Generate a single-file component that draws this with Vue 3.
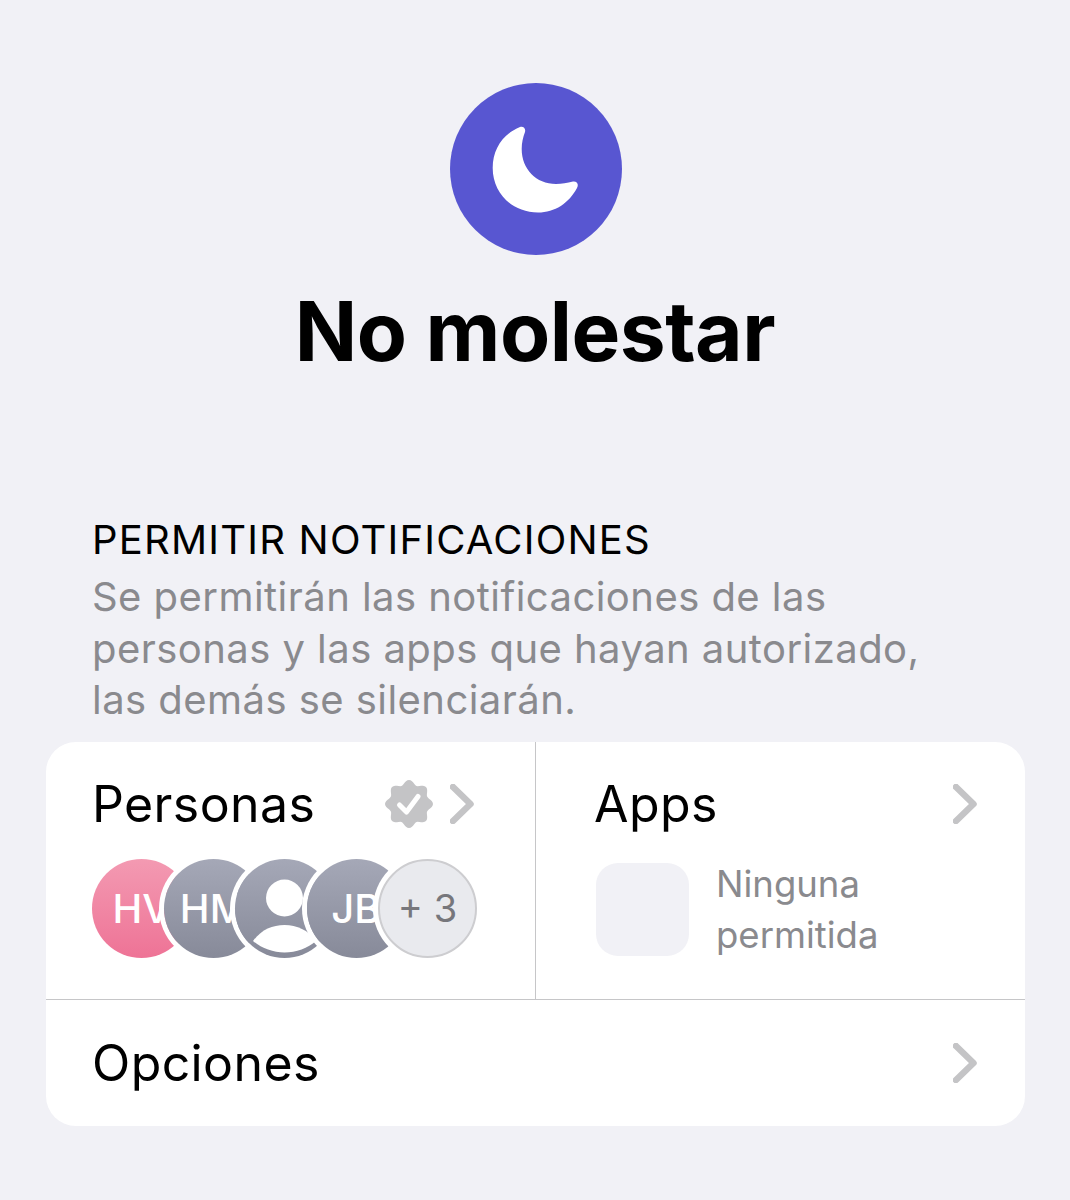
<template>
  <div class="page">
    <div class="moon-circle">
      <svg viewBox="0 0 172 172" width="172" height="172">
        <path
          d="M70 44C73 43 76 45 75 49C73 54 71.7 60 71.7 66C71.7 86 86 101 106 101C112 101 117 100 123 98.5C127 98 129 101 127 105C119 120 105 129.5 88 129.5C62 129.5 42.7 110 42.7 85C42.7 66 53 51 70 44Z"
          fill="#fff"
        />
      </svg>
    </div>
    <h1 class="title">No molestar</h1>

    <div class="intro">
      <h2 class="intro-heading">PERMITIR NOTIFICACIONES</h2>
      <p class="intro-text">
        Se permitirán las notificaciones de las<br />
        personas y las apps que hayan autorizado,<br />
        las demás se silenciarán.
      </p>
    </div>

    <div class="card">
      <div class="top-row">
        <div class="cell cell-people">
          <div class="cell-head">
            <span class="cell-title">Personas</span>
            <svg class="badge" viewBox="0 0 50 50" width="50" height="50">
              <path :d="badgePath" fill="#c4c4c6" />
              <path
                d="M15.5 26L22.5 33L34 17.5"
                fill="none"
                stroke="#fff"
                stroke-width="5"
                stroke-linecap="round"
                stroke-linejoin="round"
              />
            </svg>
            <svg class="chevron" viewBox="0 0 24 40" width="24" height="40">
              <path d="M3 3L20.5 20L3 37" />
            </svg>
          </div>
          <div class="avatars">
            <div class="avatar pink"><span>HV</span></div>
            <div class="avatar grey"><span>HM</span></div>
            <div class="avatar grey">
              <svg viewBox="0 0 99 99" width="99" height="99">
                <circle cx="49.5" cy="39" r="18.5" fill="#fff" />
                <path d="M18 82C26 71 37 66 49.5 66C62 66 73 71 81 82C73 89 61 93.5 49.5 93.5C38 93.5 26 89 18 82Z" fill="#fff" />
              </svg>
            </div>
            <div class="avatar grey"><span>JB</span></div>
            <div class="avatar more"><span>+ 3</span></div>
          </div>
        </div>

        <div class="cell cell-apps">
          <div class="cell-head">
            <span class="cell-title">Apps</span>
            <svg class="chevron" viewBox="0 0 24 40" width="24" height="40">
              <path d="M3 3L20.5 20L3 37" />
            </svg>
          </div>
          <div class="apps-body">
            <div class="app-placeholder"></div>
            <div class="apps-text">Ninguna<br />permitida</div>
          </div>
        </div>
      </div>

      <div class="options-row">
        <span class="cell-title">Opciones</span>
        <svg class="chevron" viewBox="0 0 24 40" width="24" height="40">
          <path d="M3 3L20.5 20L3 37" />
        </svg>
      </div>
    </div>
  </div>
</template>

<script setup>
// scalloped badge outline, 8 lobes
const points = []
for (let i = 0; i < 96; i++) {
  const a = (i / 96) * Math.PI * 2
  const r = 21.8 + 2.2 * Math.cos(a * 8)
  points.push((25 + r * Math.sin(a)).toFixed(2) + ' ' + (25 - r * Math.cos(a)).toFixed(2))
}
const badgePath = 'M' + points.join('L') + 'Z'
</script>

<style>
body {
  margin: 0;
  background: #f1f1f6;
}
</style>

<style scoped>
.page {
  height: 1200px;
  padding-top: 83px;
  box-sizing: border-box;
  background: #f1f1f6;
  font-family: Inter, "Liberation Sans", sans-serif;
  overflow: hidden;
}

.moon-circle {
  width: 172px;
  height: 172px;
  margin-left: 450px;
  border-radius: 50%;
  background: #5856d1;
}

.moon-circle svg {
  display: block;
}

.title {
  margin: 28px 0 0;
  font-size: 82px;
  line-height: 97px;
  font-weight: 700;
  letter-spacing: -0.5px;
  text-align: center;
  color: #000;
}

.intro {
  margin: 135px 0 0 92px;
}

.intro-heading {
  margin: 0;
  font-size: 40px;
  line-height: 50px;
  font-weight: 400;
  letter-spacing: 1.2px;
  color: #000;
}

.intro-text {
  margin: 6px 0 0;
  font-size: 40px;
  line-height: 51.5px;
  letter-spacing: 0.45px;
  color: #8a8a8e;
  white-space: nowrap;
}

.card {
  margin: 16px 45px 0 46px;
  background: #fff;
  border-radius: 30px;
  overflow: hidden;
}

.top-row {
  display: flex;
  height: 257px;
  border-bottom: 1px solid #c6c6c8;
}

.cell {
  box-sizing: border-box;
  padding-top: 38px;
}

.cell-people {
  width: 490px;
  padding-left: 46px;
  padding-right: 61px;
  border-right: 1px solid #c6c6c8;
}

.cell-apps {
  flex: 1;
  padding-left: 58px;
  padding-right: 48px;
}

.cell-head {
  display: flex;
  align-items: center;
  height: 48px;
}

.cell-title {
  flex: 1;
  font-size: 50px;
  line-height: 48px;
  color: #000;
  letter-spacing: 0.4px;
}

.badge {
  margin-right: 16px;
}

.chevron {
  display: block;
  flex: none;
}

.chevron path {
  fill: none;
  stroke: #c4c4c6;
  stroke-width: 6.5;
  stroke-linecap: round;
  stroke-linejoin: round;
}

.avatars {
  display: flex;
  margin-top: 31px;
}

.avatar {
  position: relative;
  flex: none;
  width: 99px;
  height: 99px;
  border-radius: 50%;
  margin-left: -27.5px;
  display: flex;
  align-items: center;
  justify-content: center;
  overflow: hidden;
  box-shadow: 0 0 0 5px #fff;
  font-size: 40px;
  font-weight: 500;
  color: #fff;
}

.avatar:first-child {
  margin-left: 0;
  box-shadow: none;
}

.avatar.pink {
  background: linear-gradient(#f39ab2, #ee7396);
}

.avatar.grey {
  background: linear-gradient(#a5a8b7, #878a99);
}

.avatar.more {
  box-sizing: border-box;
  background: #e9eaee;
  border: 2px solid #cdcdd0;
  font-size: 38px;
  font-weight: 400;
  color: #77777c;
}

.avatar span {
  white-space: nowrap;
}

.apps-body {
  display: flex;
  align-items: center;
  margin-top: 29px;
}

.app-placeholder {
  width: 93px;
  height: 93px;
  margin-left: 2px;
  border-radius: 22px;
  background: #f1f1f6;
}

.apps-text {
  margin-left: 27px;
  padding-top: 2px;
  font-size: 36.5px;
  line-height: 51.5px;
  color: #8a8a8e;
}

.options-row {
  display: flex;
  align-items: center;
  height: 126px;
  padding: 0 48px 0 46px;
}
</style>
